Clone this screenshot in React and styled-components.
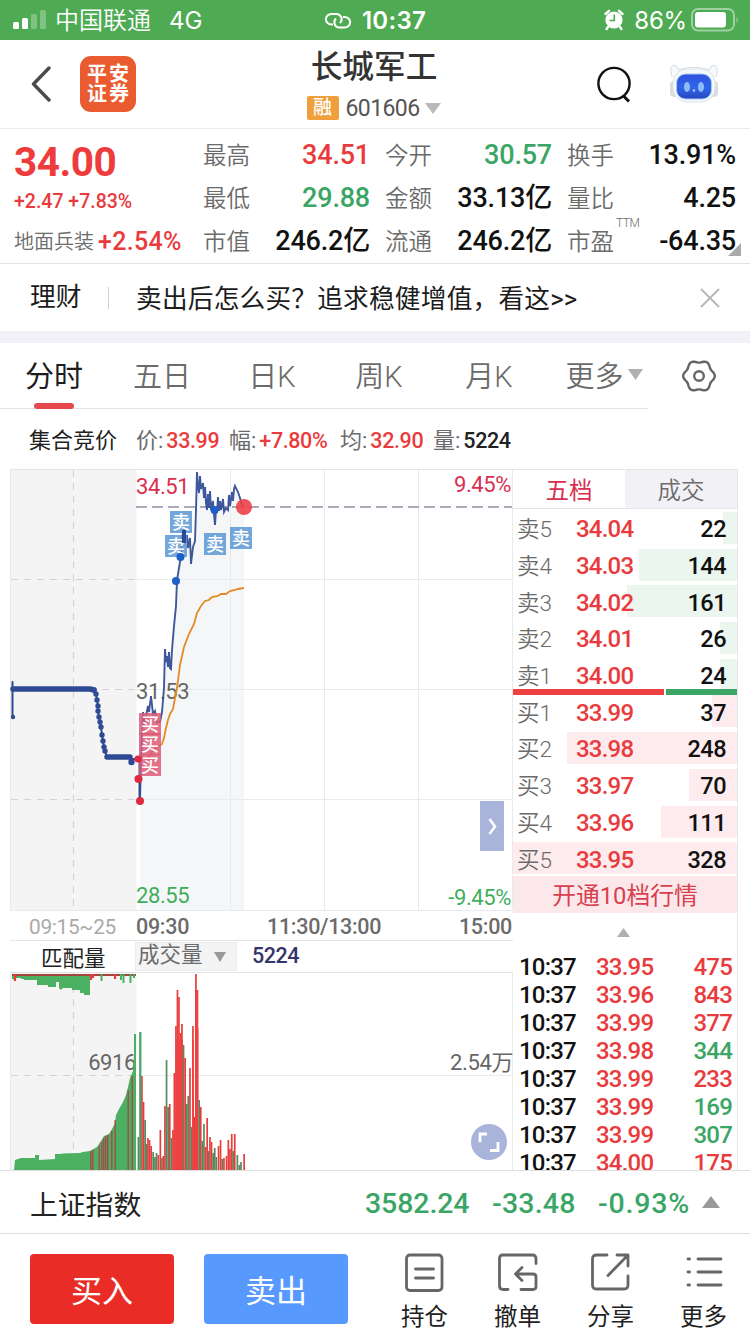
import React from "react";
import styled, { createGlobalStyle } from "styled-components";

const RED = "#e93b3d";
const GREEN = "#3aa565";
const GREY = "#6b6b6b";
const NAVY = "#2f4a94";

const stats = [
  [
    { label: "最高", value: "34.51", color: RED },
    { label: "今开", value: "30.57", color: GREEN },
    { label: "换手", value: "13.91%" },
  ],
  [
    { label: "最低", value: "29.88", color: GREEN },
    { label: "金额", value: "33.13亿" },
    { label: "量比", value: "4.25" },
  ],
  [
    { label: "市值", value: "246.2亿" },
    { label: "流通", value: "246.2亿" },
    { label: "市盈", value: "-64.35", sup: "TTM" },
  ],
];

const tabs = [
  { name: "分时", width: 108, active: true },
  { name: "五日", width: 108 },
  { name: "日K", width: 112 },
  { name: "周K", width: 102 },
  { name: "月K", width: 118 },
];

const sells = [
  { name: "卖5", price: "34.04", amount: 22, bar: 14 },
  { name: "卖4", price: "34.03", amount: 144, bar: 98 },
  { name: "卖3", price: "34.02", amount: 161, bar: 110 },
  { name: "卖2", price: "34.01", amount: 26, bar: 17 },
  { name: "卖1", price: "34.00", amount: 24, bar: 17 },
];

const buys = [
  { name: "买1", price: "33.99", amount: 37, bar: 25 },
  { name: "买2", price: "33.98", amount: 248, bar: 170 },
  { name: "买3", price: "33.97", amount: 70, bar: 48 },
  { name: "买4", price: "33.96", amount: 111, bar: 76 },
  { name: "买5", price: "33.95", amount: 328, bar: 224 },
];

const ticks = [
  ["33.95", 475, RED],
  ["33.96", 843, RED],
  ["33.99", 377, RED],
  ["33.98", 344, GREEN],
  ["33.99", 233, RED],
  ["33.99", 169, GREEN],
  ["33.99", 307, GREEN],
  ["34.00", 175, RED],
];

const priceLine =
  "140,800 141,762 142,738 143,712 144,726 146,716 148,706 149,712 151,696 153,714 155,711 157,722 160,722 162,712 163,700 164,688 165,649 166,662 167,656 168,667 169,652 170,668 171,669 172,650 174,626 176,606 177,580 179,568 181,556 182,538 184,529 185,543 187,535 188,548 190,538 191,564 193,547 195,541 196,510 197,472 198,487 199,493 200,476 201,489 203,483 204,498 205,487 206,503 207,510 208,494 209,508 210,491 211,510 213,501 214,514 215,525 216,510 217,513 218,497 219,511 220,501 221,510 223,499 224,512 226,508 228,510 229,495 230,506 232,492 233,501 234,489 235,486 238,492 240,498 242,505 244,507";

const averageLine =
  "143,768 148,758 154,749 162,744 164,738 166,728 168,720 170,714 173,709 175,698 177,688 180,665 184,647 189,634 194,624 197,613 201,606 205,601 209,600 212,597 218,596 221,594 226,594 230,591 235,590 238,589 244,588";

const auctionDots = [
  [94, 690], [96, 694], [97, 700], [98, 706], [98, 711], [99, 717],
  [100, 722], [101, 727], [102, 735], [103, 741], [104, 747], [105, 751],
];

const tradeMarks = [
  { x: 170, y: 511, type: "卖" },
  { x: 165, y: 535, type: "卖" },
  { x: 204, y: 533, type: "卖" },
  { x: 230, y: 527, type: "卖" },
  { x: 139, y: 713, type: "买" },
  { x: 139, y: 733, type: "买" },
  { x: 139, y: 754, type: "买" },
];

// [x, top of bar, r = rising / g = falling]
const volumeBars = [
  [138.5, 1137, "g"], [140.3, 1032, "g"], [142, 1076, "r"], [143.6, 1102, "r"],
  [145.2, 1120, "g"], [146.6, 1144, "g"], [148, 1138, "r"], [149.6, 1140, "r"],
  [151.2, 1146, "r"], [153.2, 1152, "g"], [155, 1157, "g"], [156.6, 1153, "g"],
  [158.4, 1155, "r"], [160.4, 1130, "r"], [162, 1158, "g"], [163.4, 1156, "r"],
  [165, 1106, "r"], [166.6, 1060, "g"], [168.2, 1107, "g"], [169.8, 1104, "r"],
  [171.4, 1138, "g"], [173, 1130, "r"], [174.4, 1073, "r"], [176, 1026, "r"],
  [177.5, 990, "r"], [179, 997, "r"], [180.5, 1033, "r"], [182, 1024, "r"],
  [183.6, 1045, "g"], [185.2, 1058, "r"], [186.8, 1104, "g"], [188.3, 1096, "g"],
  [190, 1068, "r"], [191.5, 1127, "g"], [193, 1026, "r"], [194.6, 1117, "r"],
  [196, 974, "r"], [197.6, 1028, "r"], [199.2, 1100, "g"], [200.8, 1107, "r"],
  [202.4, 1141, "g"], [204, 1124, "g"], [205.6, 1147, "r"], [207.2, 1118, "r"],
  [208.6, 1151, "g"], [210, 1137, "r"], [211.6, 1142, "r"], [213.2, 1153, "g"],
  [214.8, 1148, "g"], [216.4, 1157, "g"], [218.6, 1146, "r"], [220.6, 1140, "r"],
  [222.2, 1159, "g"], [224, 1158, "r"], [226.6, 1156, "r"], [228.4, 1140, "r"],
  [230, 1149, "r"], [231.8, 1134, "r"], [233.2, 1151, "g"], [234.8, 1134, "r"],
  [237.4, 1155, "g"], [239.4, 1165, "g"], [241, 1162, "g"], [244.2, 1154, "r"],
];

// outline of the matched volume before the open, and its rising minutes
const matchedArea =
  "14,1170 15,1160 21,1158 35,1158 35,1155 39,1155 39,1160 55,1159 55,1154 61,1154 61,1154 62,1153.5 80,1153 83,1152 90,1151 97,1147 101,1141 104,1136 109,1134 112,1129 115,1123 116,1115 119,1109 123,1102 126,1095 128,1087 130,1078 133,1071 134,1055 134,1034 136,1034 136,1170";

const matchedStripes = [
  [90, 1151], [92, 1150], [98.5, 1146], [101, 1142], [103, 1138], [105, 1136],
  [107, 1135], [111, 1131], [114.5, 1120], [127.5, 1090], [131.5, 1076],
];

const unmatchedArea =
  "12,974 12,979 16,980 16,978 21,978 21,979 24,979 24,980 37,980 37,985 48,985 48,987 56,987 56,982 59,982 59,988 61,990 63,988 72,988 72,990 80,990 80,993 84,993 84,995 90,995 90,974";

const gearPath = () => {
  const pts = [];
  for (let a = 0; a < 360; a += 4) {
    const t = (a * Math.PI) / 180;
    const r = 14.6 + 1.2 * Math.cos(6 * t);
    pts.push(`${(18 + r * Math.cos(t)).toFixed(2)},${(18 + r * Math.sin(t)).toFixed(2)}`);
  }
  return pts.join(" ");
};

const StatusBar = () => (
  <Status>
    <StatusSide>
      <svg width='34' height='24' viewBox='0 0 34 24' fill='#fff'>
        <rect x='0' y='14' width='6' height='7' rx='1.5' />
        <rect x='9' y='10' width='6' height='11' rx='1.5' />
        <rect x='18' y='6' width='6' height='15' rx='1.5' opacity='.28' />
        <rect x='27' y='2' width='6' height='19' rx='1.5' opacity='.28' />
      </svg>
      <Carrier>中国联通</Carrier>
      <Network>4G</Network>
    </StatusSide>
    <Clock>
      <svg width='28' height='20' viewBox='0 0 28 20' fill='none' stroke='#fff' strokeWidth='2'>
        <path d='M9 13.5 H7.5 A5.5 5.2 0 0 1 7.5 3 H13 A5.6 5.3 0 0 1 16 12' />
        <path d='M19 6 H20.5 A5.5 5.2 0 0 1 20.5 16.6 H15 A5.6 5.3 0 0 1 12 7.6' />
      </svg>
      10:37
    </Clock>
    <StatusSide $end>
      <svg width='20' height='22' viewBox='0 0 20 22'>
        <circle cx='10' cy='11' r='8.6' fill='#fff' />
        <path d='M1.5 5 L5 1.8 M18.5 5 L15 1.8 M4 18 L2.6 20 M16 18 L17.4 20' stroke='#fff' strokeWidth='2.4' strokeLinecap='round' />
        <path d='M10.3 5.5 V11.5 H5.6' fill='none' stroke='#4eab53' strokeWidth='1.6' />
      </svg>
      <Battery>86%</Battery>
      <svg width='48' height='24' viewBox='0 0 48 24'>
        <rect x='1' y='1' width='42' height='21.5' rx='6' fill='none' stroke='#fff' strokeOpacity='.45' strokeWidth='2' />
        <rect x='4' y='4' width='31' height='15.5' rx='3' fill='#fff' />
        <path d='M45.5 8.5 Q48 11.8 45.5 15 Z' fill='#fff' opacity='.45' />
      </svg>
    </StatusSide>
  </Status>
);

const Header = () => (
  <HeaderBar>
    <HeaderLeft>
      <svg width='20' height='36' viewBox='0 0 20 36' fill='none' stroke='#4a4a4a' strokeWidth='3.4' strokeLinecap='round' strokeLinejoin='round'>
        <path d='M18 2 L2.5 18 L18 34' />
      </svg>
      <Logo>
        <span>平安</span>
        <span>证券</span>
      </Logo>
    </HeaderLeft>
    <TitleBlock>
      <StockName>长城军工</StockName>
      <CodeRow>
        <MarginTag>融</MarginTag>
        <Code>601606</Code>
        <svg width='16' height='11' viewBox='0 0 16 11'>
          <path d='M0 0 H16 L8 11 Z' fill='#b9b9b9' />
        </svg>
      </CodeRow>
    </TitleBlock>
    <HeaderRight>
      <svg width='36' height='38' viewBox='0 0 36 38' fill='none' stroke='#111' strokeWidth='2.4'>
        <circle cx='18' cy='18.5' r='15.6' />
        <path d='M27.5 31 L33 36.5' strokeWidth='3' />
      </svg>
      <svg width='50' height='42' viewBox='0 0 50 42'>
        <defs>
          <linearGradient id='face' x1='0' y1='0' x2='0' y2='1'>
            <stop offset='0' stopColor='#2f50dc' />
            <stop offset='.55' stopColor='#2f66ea' />
            <stop offset='1' stopColor='#2746bd' />
          </linearGradient>
        </defs>
        <path d='M3 14 Q0 3 5 2 Q9 3 9.5 7 Q25 1.5 40.5 7 Q41 3 45 2 Q50 3 47 14' fill='#f8f9fb' stroke='#d8dce2' strokeWidth='1' />
        <rect x='1' y='18' width='8' height='16' rx='4' fill='#d7dde2' />
        <rect x='41' y='18' width='8' height='16' rx='4' fill='#d7dde2' />
        <rect x='4' y='6' width='42' height='33' rx='14' fill='#f6f9fc' stroke='#dbe3eb' strokeWidth='1' />
        <rect x='7.5' y='11' width='35' height='25' rx='9' fill='url(#face)' stroke='#a5caf8' strokeWidth='1' />
        <ellipse cx='18' cy='24' rx='3' ry='5' fill='#8fbcf8' />
        <ellipse cx='32' cy='24' rx='3' ry='5' fill='#8fbcf8' />
        <circle cx='25' cy='27.5' r='1.3' fill='#9cc8fa' />
      </svg>
    </HeaderRight>
  </HeaderBar>
);

const Quote = () => (
  <QuotePanel>
    <PriceBlock>
      <BigPrice>34.00</BigPrice>
      <Change>+2.47 +7.83%</Change>
      <Sector>
        地面兵装<b>+2.54%</b>
      </Sector>
    </PriceBlock>
    <StatTable>
      {stats.map((row, index) => (
        <StatRow key={index}>
          {row.map((item) => (
            <Stat key={item.label}>
              <StatLabel>
                {item.label}
                {item.sup && <Sup>{item.sup}</Sup>}
              </StatLabel>
              <StatValue $color={item.color}>{item.value}</StatValue>
            </Stat>
          ))}
        </StatRow>
      ))}
    </StatTable>
    <Corner />
  </QuotePanel>
);

const PriceChart = () => (
  <svg width='503' height='441' viewBox='10 470 503 441'>
    <rect x='11' y='470' width='125.5' height='441' fill='#f4f4f4' />
    <polygon points={`140,911 ${priceLine} 244,911`} fill='#f5f6f8' />
    <g stroke='#e9eaec' strokeWidth='1'>
      <path d='M136.5 579.5 H512 M136.5 689.5 H512 M136.5 799.5 H512' />
      <path d='M230.5 470 V911 M324.5 470 V911 M418.5 470 V911' />
      <path d='M10.5 470 V911 M512.5 470 V911 M10 910.5 H513' />
    </g>
    <g stroke='#d3d3d3' strokeWidth='1.2' strokeDasharray='7 6'>
      <path d='M11 579.5 H136 M11 689.5 H136 M11 799.5 H136' />
      <path d='M73.5 470 V911' />
    </g>
    <path d='M136 507 H512' stroke='#8f8ea3' strokeWidth='1.6' strokeDasharray='11 5' />
    <ChartText x='136' y='494' $color='#d8304f'>34.51</ChartText>
    <ChartText x='511' y='492' textAnchor='end' $color='#d8304f'>9.45%</ChartText>
    <ChartText x='136' y='699' $color='#666'>31.53</ChartText>
    <ChartText x='136' y='903' $color='#3fae5c'>28.55</ChartText>
    <ChartText x='511' y='905' textAnchor='end' $color='#3fae5c'>-9.45%</ChartText>
    <g fill='none' stroke={NAVY} strokeLinejoin='round' strokeLinecap='round'>
      <path d='M12.5 682 V717' strokeWidth='2' />
      <path d='M13 689 H90 L94 690' strokeWidth='5.5' />
      <polyline points={auctionDots.map((d) => d.join(",")).join(" ")} strokeWidth='2' />
      <path d='M105 751 L107 757' strokeWidth='2' />
      <path d='M107 757 H130' strokeWidth='5.5' />
      <path d='M130 759 L138 759 M139.5 760 V800' strokeWidth='2' />
    </g>
    <g fill={NAVY}>
      <circle cx='13' cy='717' r='2.2' />
      <circle cx='131.5' cy='762' r='3.2' />
      {auctionDots.map(([x, y]) => (
        <circle key={y} cx={x} cy={y} r='2.7' />
      ))}
    </g>
    <polyline points={averageLine} fill='none' stroke='#e38b26' strokeWidth='1.8' />
    <polyline points={priceLine} fill='none' stroke={NAVY} strokeWidth='1.9' strokeOpacity='.92' />
    {tradeMarks.map(({ x, y, type }) => (
      <g key={`${x}-${y}`}>
        <rect x={x} y={y} width='22' height='22' fill={type === "卖" ? "#5b96d2" : "#dc5a76"} fillOpacity='.85' />
        <MarkText x={x + 11} y={y + 17.5} textAnchor='middle'>{type}</MarkText>
      </g>
    ))}
    <path d='M182 530 H186 V543 H182 Z' fill={NAVY} />
    <g fill='#1a61c9'>
      <circle cx='176' cy='581' r='4' />
      <circle cx='180.5' cy='557' r='4' />
      <circle cx='214.5' cy='510' r='4' />
    </g>
    <g fill='#dc2940'>
      <circle cx='138' cy='759' r='3.6' />
      <circle cx='138.5' cy='779' r='4' />
      <circle cx='140' cy='801' r='4' />
    </g>
    <circle cx='244' cy='507' r='8' fill='#ee4047' fillOpacity='.9' />
    <rect x='480' y='801' width='24' height='50' fill='#a9b4da' />
    <path d='M489.5 819 L495 826.5 L489.5 834' fill='none' stroke='#fff' strokeWidth='2.6' />
  </svg>
);

const VolumeChart = () => (
  <svg width='503' height='197' viewBox='10 973 503 197'>
    <rect x='11' y='973' width='125.5' height='197' fill='#f4f4f4' />
    <path d='M136.5 1075.5 H512 M10.5 973 V1170 M512.5 973 V1170' stroke='#e9eaec' />
    <path d='M73.5 973 V1170 M11 1075.5 H136' stroke='#d3d3d3' strokeWidth='1.2' strokeDasharray='7 6' />
    <ChartText x='136' y='1070' textAnchor='end' $color='#666'>6916</ChartText>
    <ChartText x='513' y='1070' textAnchor='end' $color='#666'>2.54万</ChartText>
    <polygon points={unmatchedArea} fill='#4bb062' />
    <path d='M12 975 H136' stroke='#a2463f' strokeWidth='2' />
    <path d='M15 974 V981 M91 974 V980 M93 974 V978 M115 974 V979' stroke={RED} strokeWidth='2.2' />
    <path d='M101.5 974 V981 M121 974 V980 M123.5 974 V983 M130.5 974 V983 M134 974 V978' stroke='#4bb062' strokeWidth='2' />
    <polygon points={matchedArea} fill='#4bb062' />
    {matchedStripes.map(([x, top]) => (
      <rect key={x} x={x} y={top} width='1.5' height={1170 - top} fill='#a1514b' />
    ))}
    {volumeBars.map(([x, top, dir]) => (
      <rect key={x} x={x - 0.9} y={top} width='1.7' height={1170 - top} fill={dir === "r" ? "#e93d3c" : "#55895f"} />
    ))}
    <path d='M140.4 1032 V1170' stroke='#3fa868' strokeWidth='1.8' />
    <path d='M176 1040 H183 V1170 H176 Z M192.5 1040 H194 V1170 H192.5 Z M195 990 H198.3 V1170 H195 Z' fill='#ee4141' />
    <circle cx='489' cy='1142' r='18' fill='#a9b4da' />
    <path d='M480 1142 V1134 H487 M490 1150.5 H498 V1142' fill='none' stroke='#fff' strokeWidth='2.8' />
  </svg>
);

const BookRows = ({ rows, color }) =>
  rows.map((row) => (
    <BookRow key={row.name} $color={color} $bar={row.bar}>
      <BookName>{row.name}</BookName>
      <BookPrice>{row.price}</BookPrice>
      <BookAmount>{row.amount}</BookAmount>
    </BookRow>
  ));

const Market = () => (
  <MarketPanel>
    <ChartColumn>
      <PriceChart />
      <TimeAxis>
        <span>09:15~25</span>
        <b>09:30</b>
        <b>11:30/13:00</b>
        <b>15:00</b>
      </TimeAxis>
      <VolumeHead>
        <MatchLabel>匹配量</MatchLabel>
        <VolumeSelect>
          成交量
          <svg width='12' height='10' viewBox='0 0 12 10'>
            <path d='M0 0 H12 L6 10 Z' fill='#999' />
          </svg>
        </VolumeSelect>
        <VolumeValue>5224</VolumeValue>
      </VolumeHead>
      <VolumeChart />
    </ChartColumn>
    <BookColumn>
      <BookTabs>
        <BookTab $active>五档</BookTab>
        <BookTab>成交</BookTab>
      </BookTabs>
      <BookRows rows={sells} color='#eaf6ee' />
      <Ratio>
        <RatioPart $color='#ee4142' $grow={150} />
        <RatioPart $color='#3aa565' $grow={71} />
      </Ratio>
      <BookRows rows={buys} color='#fdebee' />
      <OpenTen>开通10档行情</OpenTen>
      <Collapse>
        <svg width='13' height='9' viewBox='0 0 13 9'>
          <path d='M0 9 H13 L6.5 0 Z' fill='#b0b0b0' />
        </svg>
      </Collapse>
      {ticks.map(([price, amount, color], index) => (
        <Tick key={index} $color={color}>
          <span>10:37</span>
          <span>{price}</span>
          <span>{amount}</span>
        </Tick>
      ))}
    </BookColumn>
  </MarketPanel>
);

const iconProps = {
  width: 40,
  height: 40,
  viewBox: "0 0 40 40",
  fill: "none",
  stroke: "#666",
  strokeWidth: 2.8,
  strokeLinecap: "round",
  strokeLinejoin: "round",
};

const BottomBar = () => (
  <Bottom>
    <TradeButton $color='#e92d26'>买入</TradeButton>
    <TradeButton $color='#5799fe'>卖出</TradeButton>
    <Actions>
      <Action>
        <svg {...iconProps}>
          <rect x='1.5' y='2' width='35.5' height='35.5' rx='3.5' />
          <path d='M10.5 16 H28.5 M10.5 25 H28.5' />
        </svg>
        持仓
      </Action>
      <Action>
        <svg {...iconProps}>
          <path d='M38 10.5 V5.500 Q38 2 34.5 2 H4.500 Q1.500 2 1.500 5.500 V33 Q1.500 36.500 5 36.500 H10' />
          <path d='M23 36.5 H35 Q38 36.5 38 33.5 V24 Q38 21 35 21 H19 M24 14.5 L17.5 21 L24 27.5' />
        </svg>
        撤单
      </Action>
      <Action>
        <svg {...iconProps}>
          <path d='M16 2 H5.500 Q1.500 2 1.500 6 V32 Q1.500 36 5.500 36 H33 Q37 36 37 32 V23 M26 2 H37 V13 M36.500 2.500 L17 22.500' />
        </svg>
        分享
      </Action>
      <Action>
        <svg {...iconProps}>
          <path d='M4 6 H5.5 M14 6 H37 M4 19 H5.5 M14 19 H37 M4 32 H5.5 M14 32 H37' />
        </svg>
        更多
      </Action>
    </Actions>
  </Bottom>
);

const App = () => (
  <>
    <GlobalStyle />
    <Page>
      <StatusBar />
      <Header />
      <Quote />
      <Notice>
        <NoticeTitle>理财</NoticeTitle>
        <NoticeText>卖出后怎么买？追求稳健增值，看这&gt;&gt;</NoticeText>
        <svg width='20' height='20' viewBox='0 0 20 20' stroke='#b5b5b5' strokeWidth='1.8'>
          <path d='M1 1 L19 19 M19 1 L1 19' />
        </svg>
      </Notice>
      <TabBar>
        <TabList>
          {tabs.map((tab) => (
            <Tab key={tab.name} $width={tab.width} $active={tab.active}>
              {tab.name}
            </Tab>
          ))}
          <Tab $width={112}>
            更多
            <svg width='15' height='11' viewBox='0 0 15 11'>
              <path d='M0 0 H15 L7.5 11 Z' fill='#b0b0b0' />
            </svg>
          </Tab>
        </TabList>
        <Settings>
          <svg width='36' height='36' viewBox='0 0 36 36' fill='none' stroke='#666' strokeWidth='2.4'>
            <polygon points={gearPath()} strokeLinejoin='round' />
            <circle cx='18' cy='18' r='4.8' />
          </svg>
        </Settings>
      </TabBar>
      <InfoLine>
        <InfoTitle>集合竞价</InfoTitle>
        <Info $width={93} $color={RED}>价:<b>33.99</b></Info>
        <Info $width={111} $color={RED}>幅:<b>+7.80%</b></Info>
        <Info $width={93} $color={RED}>均:<b>32.90</b></Info>
        <Info $width={90} $color='#222'>量:<b>5224</b></Info>
      </InfoLine>
      <Market />
      <IndexBar>
        <IndexName>上证指数</IndexName>
        <IndexValue $width={127} $gap={-0.1}>3582.24</IndexValue>
        <IndexValue $width={106} $gap={0.2}>-33.48</IndexValue>
        <IndexValue $width={104} $gap={0.8}>-0.93%</IndexValue>
        <svg width='18' height='12' viewBox='0 0 18 12'>
          <path d='M0 12 H18 L9 0 Z' fill='#999' />
        </svg>
      </IndexBar>
      <BottomBar />
    </Page>
  </>
);

export default App;

const GlobalStyle = createGlobalStyle`
  * {
    box-sizing: border-box;
  }

  body {
    margin: 0;
    background: #fff;
    font-family: Roboto, "Noto Sans CJK SC", sans-serif;
  }

  svg {
    display: block;
    flex: none;
  }
`;

const Page = styled.div`
  width: 750px;
  height: 1334px;
  overflow: hidden;
  display: flex;
  flex-direction: column;
  background: #fff;
  white-space: nowrap;

  > * {
    flex: none;
  }
`;

const Status = styled.div`
  height: 40px;
  padding: 0 11px 0 13px;
  display: flex;
  align-items: center;
  justify-content: space-between;
  background: #4eab53;
  color: #fff;
  font-family: Inter, "Noto Sans CJK SC", sans-serif;
  font-size: 24px;
  line-height: 38px;
`;

const StatusSide = styled.div`
  display: flex;
  align-items: center;
  width: 260px;
  justify-content: ${(props) => (props.$end ? "flex-end" : "flex-start")};
`;

const Carrier = styled.span`
  margin-left: 8px;
  padding-top: 2px;
  font-weight: 350;
`;

const Network = styled.span`
  margin-left: 18px;
  padding-top: 2px;
`;

const Clock = styled.div`
  margin-left: -2px;
  padding-top: 2px;
  display: flex;
  align-items: center;
  gap: 10px;
  font-weight: 600;
  letter-spacing: 0.3px;
`;

const Battery = styled.span`
  margin: 0 4px 0 10px;
  padding-top: 2px;
  letter-spacing: -0.2px;
`;

const HeaderBar = styled.div`
  height: 89px;
  display: flex;
  justify-content: space-between;
  border-bottom: 1px solid #ececec;
`;

const HeaderLeft = styled.div`
  width: 240px;
  padding-left: 31px;
  display: flex;
  align-items: center;
  gap: 29px;
`;

const Logo = styled.div`
  width: 56px;
  height: 56px;
  padding: 8px 0 0 2px;
  display: flex;
  flex-direction: column;
  align-items: center;
  border-radius: 11px;
  background: #ea5b30;
  color: #fff;
  font-size: 20px;
  font-weight: 700;
  line-height: 20px;
  letter-spacing: 2px;
`;

const TitleBlock = styled.div`
  display: flex;
  flex-direction: column;
  align-items: center;
  width: 200px;
  margin-left: -2px;
`;

const StockName = styled.div`
  margin-top: 8px;
  height: 41px;
  font-size: 31.7px;
  line-height: 40px;
  font-weight: 500;
  color: #333;
`;

const CodeRow = styled.div`
  margin-top: 6px;
  display: flex;
  align-items: center;
`;

const MarginTag = styled.div`
  width: 32px;
  height: 24px;
  border-radius: 2px;
  background: #efa03c;
  color: #fff;
  font-size: 19px;
  font-weight: 500;
  line-height: 24px;
  text-align: center;
`;

const Code = styled.span`
  margin: 2px 6px 0 7px;
  font-size: 23px;
  line-height: 24px;
  letter-spacing: -0.6px;
  color: #555;
`;

const HeaderRight = styled.div`
  width: 240px;
  padding-right: 31px;
  display: flex;
  align-items: center;
  justify-content: flex-end;
  gap: 37px;
`;

const QuotePanel = styled.div`
  position: relative;
  height: 135px;
  display: flex;
  border-bottom: 1px solid #e2e2e2;
`;

const PriceBlock = styled.div`
  width: 203px;
  padding: 13px 0 0 14px;
`;

const BigPrice = styled.div`
  font-size: 40.5px;
  font-weight: 700;
  line-height: 41px;
  letter-spacing: -0.5px;
  color: #ee3b3b;
`;

const Change = styled.div`
  margin-top: 7px;
  font-size: 19.5px;
  font-weight: 500;
  line-height: 24px;
  color: ${RED};
`;

const Sector = styled.div`
  margin-top: 15px;
  display: flex;
  align-items: center;
  gap: 4px;
  font-size: 20px;
  font-weight: 350;
  line-height: 26px;
  color: ${GREY};

  b {
    font-size: 25px;
    font-weight: 500;
    letter-spacing: 0.3px;
    color: ${RED};
  }
`;

const StatTable = styled.div`
  padding-top: 4px;
`;

const StatRow = styled.div`
  height: 43px;
  display: grid;
  grid-template-columns: 167px 167px 169px;
  column-gap: 15px;
`;

const Stat = styled.div`
  display: flex;
  align-items: center;
  justify-content: space-between;
`;

const StatLabel = styled.div`
  position: relative;
  padding-bottom: 2px;
  font-size: 23.5px;
  font-weight: 350;
  color: ${GREY};
`;

const Sup = styled.span`
  position: absolute;
  left: 49px;
  top: -7px;
  font-size: 12px;
  letter-spacing: -0.5px;
`;

const StatValue = styled.div`
  font-size: 27px;
  font-weight: 500;
  line-height: 36px;
  letter-spacing: -0.2px;
  color: ${(props) => props.$color || "#111"};
`;

const Corner = styled.div`
  position: absolute;
  right: 9px;
  bottom: 7px;
  border-left: 13px solid transparent;
  border-bottom: 13px solid #aaa;
`;

const Notice = styled.div`
  height: 67px;
  padding: 0 30px;
  display: flex;
  align-items: center;
  color: #1c1c1c;
  font-size: 25.7px;
`;

const NoticeTitle = styled.div`
  width: 79px;
  height: 22px;
  line-height: 21px;
  border-right: 1px solid #d0d0d0;
`;

const NoticeText = styled.div`
  flex: 1;
  margin-left: 27px;
  padding-bottom: 3px;
  letter-spacing: 0.2px;
`;

const TabBar = styled.div`
  height: 78px;
  display: flex;
  border-top: 12px solid #f1f1f7;
`;

const TabList = styled.div`
  width: 648px;
  display: flex;
  border-bottom: 1px solid #e4e4e4;
`;

const Tab = styled.div`
  position: relative;
  flex: none;
  width: ${(props) => props.$width}px;
  padding-bottom: 3px;
  display: flex;
  align-items: center;
  justify-content: center;
  gap: 4px;
  font-size: 29px;
  font-weight: ${(props) => (props.$active ? 400 : 350)};
  color: ${(props) => (props.$active ? "#1c1c1c" : GREY)};

  &::after {
    content: "";
    display: ${(props) => (props.$active ? "block" : "none")};
    position: absolute;
    left: 34px;
    bottom: -1px;
    width: 40px;
    height: 6px;
    border-radius: 3px;
    background: #e6484d;
  }
`;

const Settings = styled.div`
  flex: 1;
  display: flex;
  align-items: center;
  justify-content: center;
`;

const InfoLine = styled.div`
  height: 60px;
  padding: 0 0 2px 29px;
  display: flex;
  align-items: center;
  font-size: 22px;
`;

const InfoTitle = styled.div`
  width: 107px;
  color: #222;
`;

const Info = styled.div`
  width: ${(props) => props.$width}px;
  color: ${GREY};

  b {
    margin-left: 3px;
    font-size: 21.5px;
    font-weight: 500;
    letter-spacing: -0.4px;
    color: ${(props) => props.$color};
  }
`;

const MarketPanel = styled.div`
  height: 701px;
  margin: 0 12px 0 10px;
  display: flex;
  border-top: 1px solid #e4e4e4;
  overflow: hidden;
`;

const ChartColumn = styled.div`
  width: 503px;
`;

const ChartText = styled.text`
  font-size: 22px;
  letter-spacing: -0.4px;
  fill: ${(props) => props.$color};
`;

const MarkText = styled.text`
  font-size: 18px;
  font-weight: 500;
  fill: #fff;
`;

const TimeAxis = styled.div`
  height: 29px;
  padding: 2px 1px 0 19px;
  display: grid;
  grid-template-columns: 107px 131px 115px 1fr;
  align-items: center;
  font-size: 21.5px;
  letter-spacing: -0.3px;
  color: #aaa;

  span {
    font-size: 20.8px;
  }

  b {
    font-weight: 500;
    color: ${GREY};
  }

  b:last-child {
    text-align: right;
  }
`;

const VolumeHead = styled.div`
  height: 33px;
  display: flex;
  align-items: center;
  border: 1px solid #e4e4e4;
  border-width: 1px 0;
  font-size: 21.5px;
`;

const MatchLabel = styled.div`
  width: 125px;
  padding: 0 0 1px 31px;
  color: #222;
`;

const VolumeSelect = styled.div`
  width: 102px;
  height: 29px;
  padding: 0 0 4px 2px;
  display: flex;
  align-items: center;
  gap: 11px;
  border: 1px solid #ebebeb;
  background: #f4f4f4;
  color: ${GREY};
  line-height: 23px;

  svg {
    margin-top: 4px;
  }
`;

const VolumeValue = styled.div`
  margin-left: 15px;
  padding-bottom: 3px;
  font-weight: 500;
  letter-spacing: -0.5px;
  color: #35356b;
`;

const BookColumn = styled.div`
  width: 225px;
  border-right: 1px solid #e8e8e8;
`;

const BookTabs = styled.div`
  height: 39px;
  display: flex;
  border-bottom: 1px solid #e4e4e4;
`;

const BookTab = styled.div`
  width: 112px;
  font-size: 23.5px;
  line-height: 42px;
  text-align: center;
  font-weight: ${(props) => (props.$active ? 400 : 350)};
  color: ${(props) => (props.$active ? "#d8304f" : GREY)};
  background: ${(props) => (props.$active ? "#fff" : "#f1f1f6")};
`;

const BookRow = styled.div`
  height: 36.7px;
  padding: 2px 11px 0 4px;
  display: flex;
  align-items: center;
  background: linear-gradient(${(props) => props.$color}, ${(props) => props.$color}) no-repeat right
    3px / ${(props) => props.$bar}px 32px;
`;

const BookName = styled.div`
  width: 59px;
  padding-bottom: 2px;
  font-size: 22.5px;
  font-weight: 350;
  color: ${GREY};
`;

const BookPrice = styled.div`
  padding-top: 2px;
  font-size: 24px;
  font-weight: 500;
  letter-spacing: -0.8px;
  color: ${RED};
`;

const BookAmount = styled.div`
  flex: 1;
  padding-top: 2px;
  text-align: right;
  font-size: 23.5px;
  font-weight: 500;
  letter-spacing: -0.5px;
  color: #111;
`;

const Ratio = styled.div`
  height: 6px;
  margin: -3px 0;
  display: flex;
  gap: 2px;
`;

const RatioPart = styled.div`
  flex: ${(props) => props.$grow};
  background: ${(props) => props.$color};
`;

const OpenTen = styled.div`
  height: 37px;
  background: #fce8ea;
  color: #d9404f;
  font-size: 23.8px;
  line-height: 40px;
  text-align: center;
`;

const Collapse = styled.div`
  height: 40px;
  padding-right: 3px;
  display: flex;
  align-items: center;
  justify-content: center;
`;

const Tick = styled.div`
  height: 28px;
  padding: 0 5px 0 6px;
  display: flex;
  align-items: center;
  justify-content: space-between;
  font-size: 24px;
  font-weight: 500;
  line-height: 28px;
  letter-spacing: -0.8px;
  color: ${RED};

  span:first-child {
    width: 77px;
    color: #111;
  }

  span:last-child {
    flex: 1;
    text-align: right;
    color: ${(props) => props.$color};
  }
`;

const IndexBar = styled.div`
  height: 64px;
  padding: 3px 30px 0;
  display: flex;
  align-items: center;
  border: 1px solid #dedede;
  border-width: 1px 0;

  svg {
    margin-bottom: 4px;
  }
`;

const IndexName = styled.div`
  flex: 1;
  padding-bottom: 2px;
  font-size: 27.8px;
  color: #222;
`;

const IndexValue = styled.div`
  width: ${(props) => props.$width}px;
  font-size: 28.5px;
  font-weight: 500;
  letter-spacing: ${(props) => props.$gap}px;
  color: ${GREEN};
`;

const Bottom = styled.div`
  height: 100px;
  padding-left: 30px;
  display: flex;
  gap: 30px;
`;

const TradeButton = styled.div`
  width: 144px;
  height: 70px;
  margin-top: 20px;
  border-radius: 4px;
  background: ${(props) => props.$color};
  color: #fff;
  font-size: 31px;
  line-height: 75px;
  text-align: center;
`;

const Actions = styled.div`
  flex: 1;
  display: grid;
  grid-template-columns: repeat(4, 93px);
`;

const Action = styled.div`
  padding-top: 19px;
  display: flex;
  flex-direction: column;
  align-items: center;
  gap: 6px;
  font-size: 23.5px;
  line-height: 36px;
  color: #222;
`;
